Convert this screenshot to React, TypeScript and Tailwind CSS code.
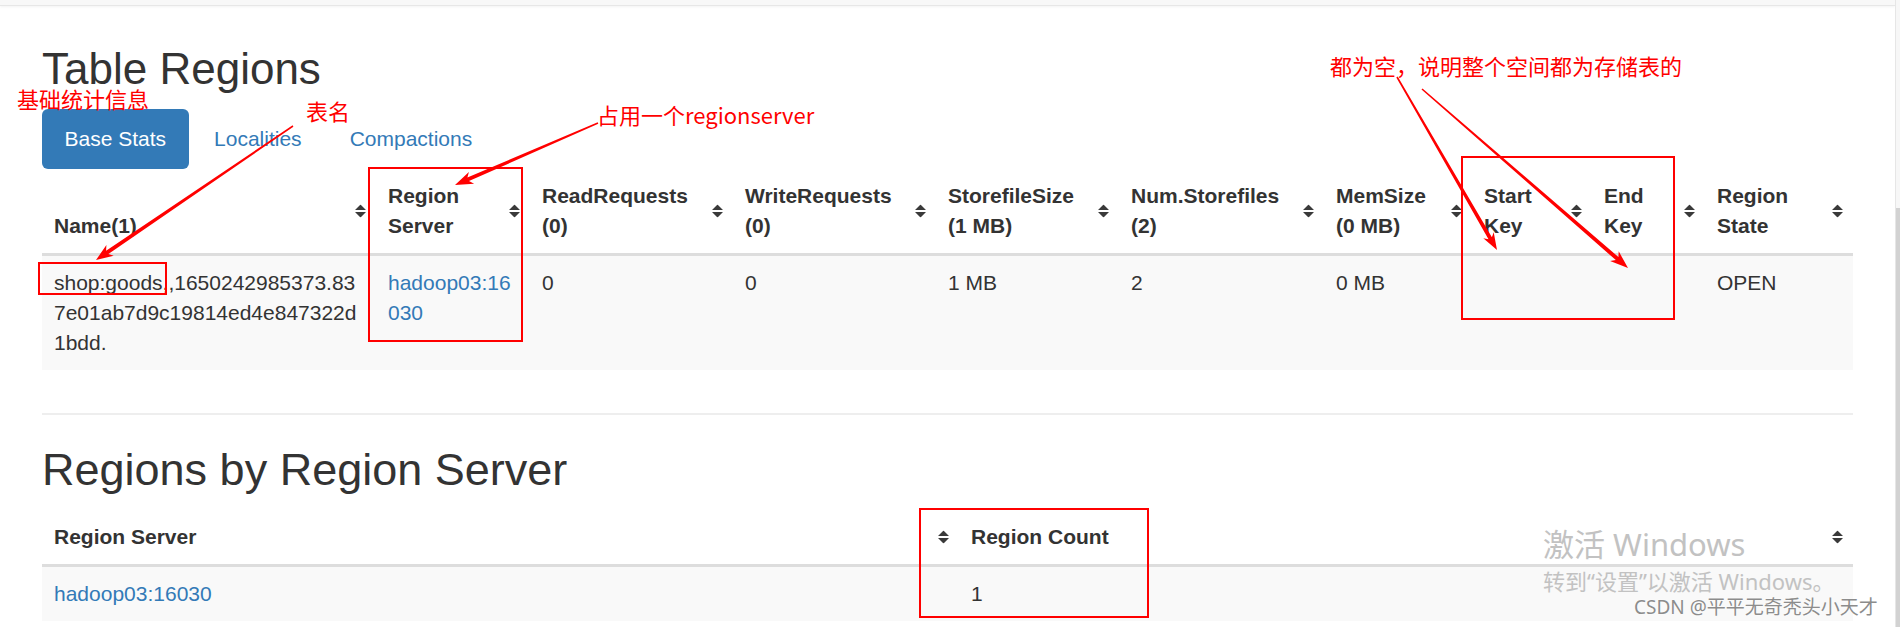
const regionCols = [
  { lines: ["Name(1)"], w: "w-[334px]" },
  { lines: ["Region", "Server"], w: "w-[154px]" },
  { lines: ["ReadRequests", "(0)"], w: "w-[203px]" },
  { lines: ["WriteRequests", "(0)"], w: "w-[203px]" },
  { lines: ["StorefileSize", "(1 MB)"], w: "w-[183px]" },
  { lines: ["Num.Storefiles", "(2)"], w: "w-[205px]" },
  { lines: ["MemSize", "(0 MB)"], w: "w-[148px]" },
  { lines: ["Start", "Key"], w: "w-[120px]" },
  { lines: ["End", "Key"], w: "w-[113px]" },
  { lines: ["Region", "State"], w: "w-[148px]" },
];

const regionRow = ["0", "0", "1 MB", "2", "0 MB", "", "", "OPEN"];

function SortIcon() {
  return (
    <svg
      className="absolute right-[10px] top-1/2 -translate-y-1/2"
      width="11"
      height="13"
      viewBox="0 0 11 13"
    >
      <path d="M5.5 0L11 5.6H0Z M0 7.4H11L5.5 13Z" fill="#3a3a3a" />
    </svg>
  );
}

// tapered screenshot-annotation arrow, thin at the tail, filled head at the tip
function arrow(x1: number, y1: number, x2: number, y2: number, hl = 16, hw = 13) {
  const len = Math.hypot(x2 - x1, y2 - y1);
  const ux = (x2 - x1) / len;
  const uy = (y2 - y1) / len;
  const nx = -uy;
  const ny = ux;
  const bx = x2 - ux * hl;
  const by = y2 - uy * hl;
  const nbx = x2 - ux * hl * 0.8;
  const nby = y2 - uy * hl * 0.8;
  const w0 = 0.8;
  const w1 = 2;
  const p = [
    [x1 + nx * w0, y1 + ny * w0],
    [nbx + nx * w1, nby + ny * w1],
    [bx + nx * (hw / 2), by + ny * (hw / 2)],
    [x2, y2],
    [bx - nx * (hw / 2), by - ny * (hw / 2)],
    [nbx - nx * w1, nby - ny * w1],
    [x1 - nx * w0, y1 - ny * w0],
  ];
  return "M" + p.map((q) => q[0].toFixed(1) + " " + q[1].toFixed(1)).join("L") + "Z";
}

function Annotations() {
  return (
    <>
      <svg className="pointer-events-none absolute left-0 top-0" width="1900" height="627">
        <g fill="none" stroke="#ff0000" strokeWidth="2">
          <rect x="39" y="263" width="127" height="31" />
          <rect x="369" y="168" width="153" height="173" />
          <rect x="1462" y="157" width="212" height="162" />
          <rect x="920" y="509" width="228" height="108" />
        </g>
        <g fill="#ff0000">
          <path d={arrow(293, 126, 96, 260, 17, 13)} />
          <path d={arrow(598, 123, 455, 185, 18, 13)} />
          <path d={arrow(1397, 77, 1497, 250, 17, 12)} />
          <path d={arrow(1422, 89, 1628, 268, 18, 13)} />
        </g>
      </svg>
      <div className="pointer-events-none absolute font-['Noto_Sans_CJK_SC',sans-serif] text-[22px] leading-none text-[#ff0000]">
        <span className="absolute left-[17px] top-[87px] whitespace-nowrap">基础统计信息</span>
        <span className="absolute left-[306px] top-[99px] whitespace-nowrap">表名</span>
        <span className="absolute left-[597px] top-[103px] whitespace-nowrap">占用一个regionserver</span>
        <span className="absolute left-[1330px] top-[54px] whitespace-nowrap">都为空，说明整个空间都为存储表的</span>
      </div>
      <div className="pointer-events-none absolute font-['Noto_Sans','Noto_Sans_CJK_SC',sans-serif] leading-none">
        <span className="absolute left-[1543px] top-[529px] whitespace-nowrap text-[31px] text-[#c2c2c2]">激活 Windows</span>
        <span className="absolute left-[1543px] top-[570px] whitespace-nowrap text-[22px] text-[#c2c2c2]">转到“设置”以激活 Windows。</span>
        <span className="absolute left-[1634px] top-[598px] whitespace-nowrap text-[19px] text-[#8c8c8c] [text-shadow:0_0_2px_#ffffff]">
          CSDN @平平无奇秃头小天才
        </span>
      </div>
    </>
  );
}

export default function App() {
  const th = "relative px-3 py-3 text-left align-bottom font-bold leading-[30px] border-b-[3px] border-[#dddddd]";
  const td = "px-3 py-3 align-top leading-[30px]";
  return (
    <div className="relative flex h-[627px] w-[1900px] overflow-hidden bg-white font-['Liberation_Sans',Arial,sans-serif] text-[21px] text-[#333333]">
      <div className="w-[1895px] shrink-0">
        <div className="h-[6px] border-b border-[#e7e7e7] bg-[#f8f8f8] shadow-[0_1px_3px_rgba(0,0,0,0.05)]" />
        <div className="px-[42px]">
          <h1 className="mt-[39px] text-[44px] font-normal leading-[48px]">Table Regions</h1>
          <ul className="mt-[16px] flex">
            <li className="rounded-[6px] bg-[#337ab7] px-[22.5px] py-[15px] leading-[30px] text-white">Base Stats</li>
            <li className="ml-[3px] px-[22.5px] py-[15px] leading-[30px] text-[#337ab7]">Localities</li>
            <li className="ml-[3px] px-[22.5px] py-[15px] leading-[30px] text-[#337ab7]">Compactions</li>
          </ul>
          <table className="w-full table-fixed border-collapse">
            <thead>
              <tr>
                {regionCols.map((c, i) => (
                  <th key={i} className={th + " " + c.w}>
                    {c.lines.map((l, j) => (
                      <div key={j}>{l}</div>
                    ))}
                    <SortIcon />
                  </th>
                ))}
              </tr>
            </thead>
            <tbody>
              <tr className="bg-[#f9f9f9]">
                <td className={td + " break-all"}>shop:goods,,1650242985373.837e01ab7d9c19814ed4e847322d1bdd.</td>
                <td className={td + " break-all text-[#337ab7]"}>hadoop03:16030</td>
                {regionRow.map((v, i) => (
                  <td key={i} className={td}>
                    {v}
                  </td>
                ))}
              </tr>
            </tbody>
          </table>
          <hr className="mt-[43px] border-t-2 border-[#eeeeee]" />
          <h1 className="mb-[15px] mt-[30px] text-[45px] font-normal leading-[50px]">Regions by Region Server</h1>
          <table className="w-full table-fixed border-collapse">
            <thead>
              <tr>
                <th className={th + " w-[917px]"}>
                  Region Server
                  <SortIcon />
                </th>
                <th className={th + " w-[894px]"}>
                  Region Count
                  <SortIcon />
                </th>
              </tr>
            </thead>
            <tbody>
              <tr className="bg-[#f9f9f9]">
                <td className={td + " text-[#337ab7]"}>hadoop03:16030</td>
                <td className={td}>1</td>
              </tr>
            </tbody>
          </table>
        </div>
      </div>
      <div className="relative w-[5px] shrink-0 border-l border-[#e6e6e6] bg-[#f7f7f7]">
        <div className="absolute bottom-0 left-0 right-0 top-[208px] bg-[#d2d2d2]" />
      </div>
      <Annotations />
    </div>
  );
}
